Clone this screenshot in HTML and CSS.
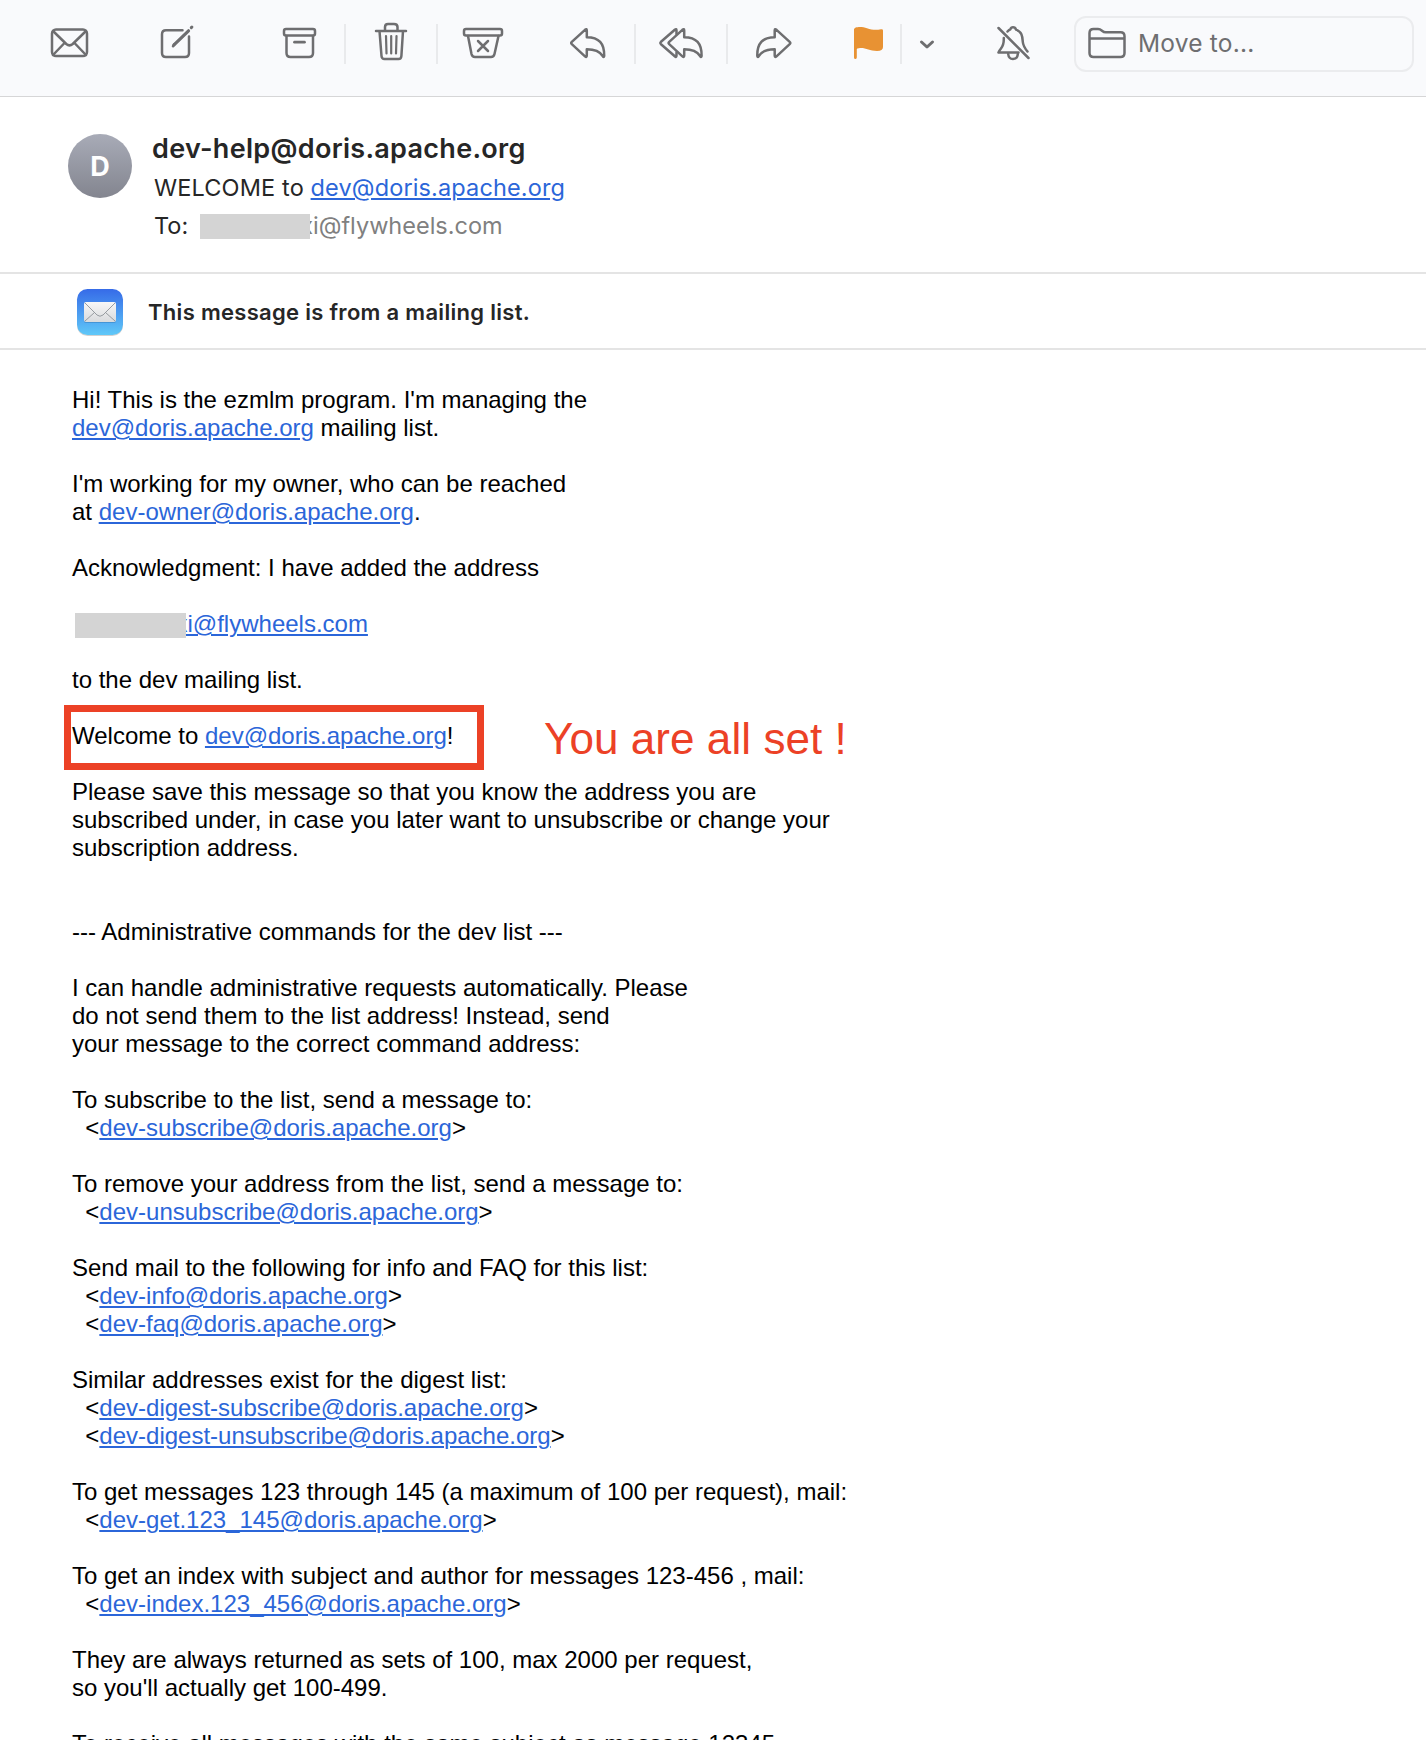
FILE: index.html
```html
<!DOCTYPE html>
<html lang="en">
<head>
<meta charset="utf-8">
<title>WELCOME to dev@doris.apache.org</title>
<link rel="stylesheet" href="styles.css">
</head>
<body>
<header class="toolbar">
  <svg class="icon mail" width="40" height="46" viewBox="50 20 40 46"><rect x="52" y="29.5" width="35" height="26.5" rx="4"/><path d="M53 31L66.3 44Q69.5 46.8 72.7 44L86 31M53 55L64.5 43M86 55L74.5 43"/></svg>
  <svg class="icon compose" width="40" height="46" viewBox="158 20 40 46"><path d="M182.5 30.2H166Q162 30.2 162 34.2V53Q162 57 166 57H185Q189 57 189 53V36.500"/><path d="M174 44.800L188.500 30.800" stroke-width="3.200"/><path d="M173 46.200L174.500 44" /><path d="M191.300 27.600L191.900 27" stroke-width="3"/></svg>
  <svg class="icon archive" width="40" height="46" viewBox="280 20 40 46"><rect x="284" y="29" width="31" height="6.500" rx="2"/><path d="M286.500 36V53Q286.500 57 290.500 57H309Q313 57 313 53V36"/><path d="M294.500 42.200H304.500" stroke-width="2.700"/></svg>
  <i class="rule rule-a"></i>
  <svg class="icon trash" width="40" height="46" viewBox="372 20 40 46"><path d="M376 31H406M385 31V27Q385 24 388 24H394Q397.500 24 397.500 27V31M379.500 31L381.500 56Q381.700 59 384.500 59H398.500Q401.200 59 401.400 56L403 31"/><path stroke-width="2.200" d="M386 36L386.500 53.500M391.200 36V53.500M396.500 36L396 53.500"/></svg>
  <i class="rule rule-b"></i>
  <svg class="icon junk" width="46" height="46" viewBox="460 20 46 46"><rect x="464" y="29" width="38" height="6.500" rx="2"/><path d="M468 36L471.500 54Q472.200 57 475 57H491Q493.800 57 494.500 54L498.500 36M478 41L488 51M488 41L478 51"/></svg>
  <svg class="icon reply" width="42" height="46" viewBox="567 20 42 46"><path d="M571.800 41.800L585 29.800Q586.800 28.300 586.800 30.500V37.200C599 37.200 604.500 43.500 604.200 56Q603.800 57.800 602.700 56C599.500 51 595 49.300 586.800 49.300V55.500Q586.800 57.800 585 56.300L571.800 44.200Q570.500 43 571.800 41.800Z"/></svg>
  <i class="rule rule-c"></i>
  <svg class="icon reply-all" width="50" height="46" viewBox="656 20 50 46"><path d="M676.500 34V30.500Q676.500 28.300 674.800 29.800L661 41.800Q659.700 43 661 44.200L674.800 56.300Q676.500 57.800 676.500 55.500V52.500"/><path transform="translate(97.400 0)" d="M571.800 41.800L585 29.800Q586.800 28.300 586.800 30.500V37.200C599 37.200 604.500 43.500 604.200 56Q603.800 57.800 602.700 56C599.500 51 595 49.300 586.800 49.300V55.500Q586.800 57.800 585 56.300L571.800 44.200Q570.500 43 571.800 41.800Z"/></svg>
  <i class="rule rule-d"></i>
  <svg class="icon forward" width="42" height="46" viewBox="753 20 42 46"><path transform="translate(1361.500 0) scale(-1 1)" d="M571.800 41.800L585 29.800Q586.800 28.300 586.800 30.500V37.200C599 37.200 604.500 43.500 604.200 56Q603.800 57.800 602.700 56C599.500 51 595 49.300 586.800 49.300V55.500Q586.800 57.800 585 56.300L571.800 44.200Q570.500 43 571.800 41.800Z"/></svg>
  <svg class="flag" width="36" height="46" viewBox="850 20 36 46"><path d="M854 29.500C854 26.500 862 26.400 867 28.200C872 30 876 30.300 881 29.300Q883 28.900 883 30.500V47Q883 51 877 51C869 51 866 47.500 859 48.200Q856.800 48.500 856.800 49V57.500Q856.500 59 855.400 59Q854 59 854 57.500Z"/></svg>
  <i class="rule rule-e"></i>
  <svg class="icon chevron" width="22" height="46" viewBox="916 20 22 46"><path d="M921.500 42L927 47L932.500 42" stroke-width="3"/></svg>
  <svg class="icon mute" width="40" height="46" viewBox="994 20 40 46"><path d="M998.500 28L1028.500 58M1003.800 38C1004.200 48 1000.500 47.500 998.500 52.500H1018.500M1007.500 31.500Q1009 29.800 1010.200 29.600Q1011 27.300 1013 27.300Q1015.300 27.300 1016 29.600C1022.500 32 1022.300 37 1022.800 42Q1023.300 46.500 1027.500 51.500"/><path d="M1008.200 54Q1008.700 59 1013 59Q1017.400 59 1017.800 54"/></svg>
  <div class="move">
    <svg class="icon" width="38" height="34" viewBox="1087.500 26 38 34"><path d="M1089 53V33Q1089 29 1093 29H1097.500Q1099.500 29 1101.500 30.700T1105.500 32.300H1120Q1124 32.300 1124 36.300V53Q1124 57 1120 57H1093Q1089 57 1089 53ZM1089 38.500H1124"/></svg>
    <span>Move to...</span>
  </div>
</header>
<section class="summary">
  <div class="avatar">D</div>
  <div class="who">
    <div class="sender">dev-help@doris.apache.org</div>
    <div class="subject">WELCOME to <a>dev@doris.apache.org</a></div>
    <div class="to"><span class="label">To:</span><i class="redacted"></i><span class="addr">xi@flywheels.com</span></div>
  </div>
</section>
<section class="banner">
  <svg width="48" height="52" viewBox="0 0 48 52">
    <defs>
      <linearGradient id="sky" x2="0" y2="1"><stop stop-color="#366be8"/><stop offset="1" stop-color="#5fc8f8"/></linearGradient>
      <linearGradient id="paper" x2="0" y2="1"><stop stop-color="#f7f7f7"/><stop offset="1" stop-color="#d9dbdd"/></linearGradient>
    </defs>
    <rect x="1" y="4" width="46" height="46" rx="10.500" fill="#000" opacity=".18"/>
    <rect x="1" y="3" width="46" height="46" rx="10.500" fill="url(#sky)"/>
    <rect x="8" y="17" width="32" height="20" rx="2" fill="#2c6daa" opacity=".4"/>
    <rect x="8" y="16" width="32" height="20" rx="2" fill="url(#paper)"/>
    <path d="M9 17L21 29Q24 31.500 27 29L39 17M9 35L18.500 26.500M39 35L29.500 26.500" fill="none" stroke="#8d9399" stroke-width=".9"/>
  </svg>
  <span>This message is from a mailing list.</span>
</section>
<main class="message">
<p>Hi! This is the ezmlm program. I'm managing the
<a>dev@doris.apache.org</a> mailing list.</p>
<p>I'm working for my owner, who can be reached
at <a>dev-owner@doris.apache.org</a>.</p>
<p>Acknowledgment: I have added the address</p>
<p><i class="redacted"></i><a>xi@flywheels.com</a></p>
<p>to the dev mailing list.</p>
<p class="welcome">Welcome to <a>dev@doris.apache.org</a>!<i class="frame"></i><span class="note">You are all set !</span></p>
<p>Please save this message so that you know the address you are
subscribed under, in case you later want to unsubscribe or change your
subscription address.</p>
<p class="section">--- Administrative commands for the dev list ---</p>
<p>I can handle administrative requests automatically. Please
do not send them to the list address! Instead, send
your message to the correct command address:</p>
<p>To subscribe to the list, send a message to:
  &lt;<a>dev-subscribe@doris.apache.org</a>&gt;</p>
<p>To remove your address from the list, send a message to:
  &lt;<a>dev-unsubscribe@doris.apache.org</a>&gt;</p>
<p>Send mail to the following for info and FAQ for this list:
  &lt;<a>dev-info@doris.apache.org</a>&gt;
  &lt;<a>dev-faq@doris.apache.org</a>&gt;</p>
<p>Similar addresses exist for the digest list:
  &lt;<a>dev-digest-subscribe@doris.apache.org</a>&gt;
  &lt;<a>dev-digest-unsubscribe@doris.apache.org</a>&gt;</p>
<p>To get messages 123 through 145 (a maximum of 100 per request), mail:
  &lt;<a>dev-get.123_145@doris.apache.org</a>&gt;</p>
<p>To get an index with subject and author for messages 123-456 , mail:
  &lt;<a>dev-index.123_456@doris.apache.org</a>&gt;</p>
<p>They are always returned as sets of 100, max 2000 per request,
so you'll actually get 100-499.</p>
<p>To receive all messages with the same subject as message 12345,</p>
</main>
</body>
</html>
```
FILE: styles.css
```css
* { box-sizing: border-box; }
body {
  margin: 0;
  height: 1740px;
  overflow: hidden;
  background: #fff;
  color: #262626;
  font-family: Inter, "Liberation Sans", sans-serif;
}
a { color: #2b66d9; text-decoration: underline; text-decoration-thickness: 2px; text-underline-offset: 2px; }

.toolbar {
  display: flex;
  height: 97px;
  padding-left: 50px;
  background: #f9fafc;
  border-bottom: 1px solid #d6d6d7;
}
.toolbar > svg { flex: none; margin-top: 20px; }
.icon { fill: none; stroke: #6e6e70; stroke-width: 2.5; stroke-linecap: round; stroke-linejoin: round; }
.rule { flex: none; width: 2px; height: 40px; margin-top: 24px; background: #e9eaec; }
.compose { margin-left: 68px; }
.archive { margin-left: 82px; }
.rule-a { margin-left: 24px; }
.trash { margin-left: 26px; }
.rule-b { margin-left: 24px; }
.junk { margin-left: 22px; }
.reply { margin-left: 61px; }
.rule-c { margin-left: 25px; }
.reply-all { margin-left: 20px; }
.rule-d { margin-left: 20px; }
.forward { margin-left: 25px; }
.flag { margin-left: 55px; fill: #e89233; }
.rule-e { margin-left: 14px; }
.chevron { margin-left: 14px; }
.mute { margin-left: 56px; }
.move {
  display: flex;
  flex: none;
  align-items: center;
  width: 340px;
  height: 56px;
  margin: 16px 0 0 40px;
  padding-left: 12px;
  border: 2px solid #ebecee;
  border-radius: 12px;
  color: #6e6e70;
  font-size: 24.5px;
  letter-spacing: 0.2px;
}
.move svg { margin-top: -2px; }
.move span { margin: -2px 0 0 12px; }

.summary {
  display: flex;
  height: 177px;
  padding: 37px 0 0 68px;
  border-bottom: 2px solid #e4e4e4;
}
.avatar {
  width: 64px;
  height: 64px;
  border-radius: 50%;
  background: linear-gradient(#a8abb7, #83858f);
  color: #fff;
  font-size: 27px;
  font-weight: 700;
  line-height: 65px;
  text-align: center;
}
.who { margin: -5px 0 0 20px; white-space: nowrap; }
.sender { height: 38px; line-height: 40px; font-size: 27px; font-weight: 600; letter-spacing: 0.3px; }
.subject { height: 40px; padding-left: 2px; line-height: 42px; font-size: 23.5px; letter-spacing: 0.13px; }
.to { display: flex; height: 38px; padding-left: 2px; line-height: 38px; font-size: 23.5px; }
.to .addr { color: #808080; }
.redacted { position: relative; z-index: 1; background: #d4d4d4; }
.to .redacted { width: 110px; height: 25px; margin: 7px -10px 0 12px; }

.banner {
  display: flex;
  align-items: center;
  height: 76px;
  padding: 2px 0 0 76px;
  border-bottom: 2px solid #e4e4e4;
  font-size: 22px;
  font-weight: 600;
  letter-spacing: 0.3px;
}
.banner span { margin-left: 24px; }

.message {
  padding: 36px 0 0 72px;
  color: #000;
  font: 24px/28px "Liberation Sans", Arial, sans-serif;
}
.message p { margin: 0 0 28px; white-space: pre; }
.message .section { margin-top: 56px; }
.message .redacted { display: inline-block; width: 111px; height: 25px; margin: 0 -10.5px 0 3px; vertical-align: -6px; }
.message p:has(.redacted) { height: 28px; }
.welcome { position: relative; }
.frame { position: absolute; left: -8px; top: -17px; width: 420px; height: 65px; border: 7px solid #ec4126; }
.note { position: absolute; left: 472px; top: -8px; color: #ec4126; font-size: 44px; line-height: 50px; letter-spacing: 0.07px; }
```
